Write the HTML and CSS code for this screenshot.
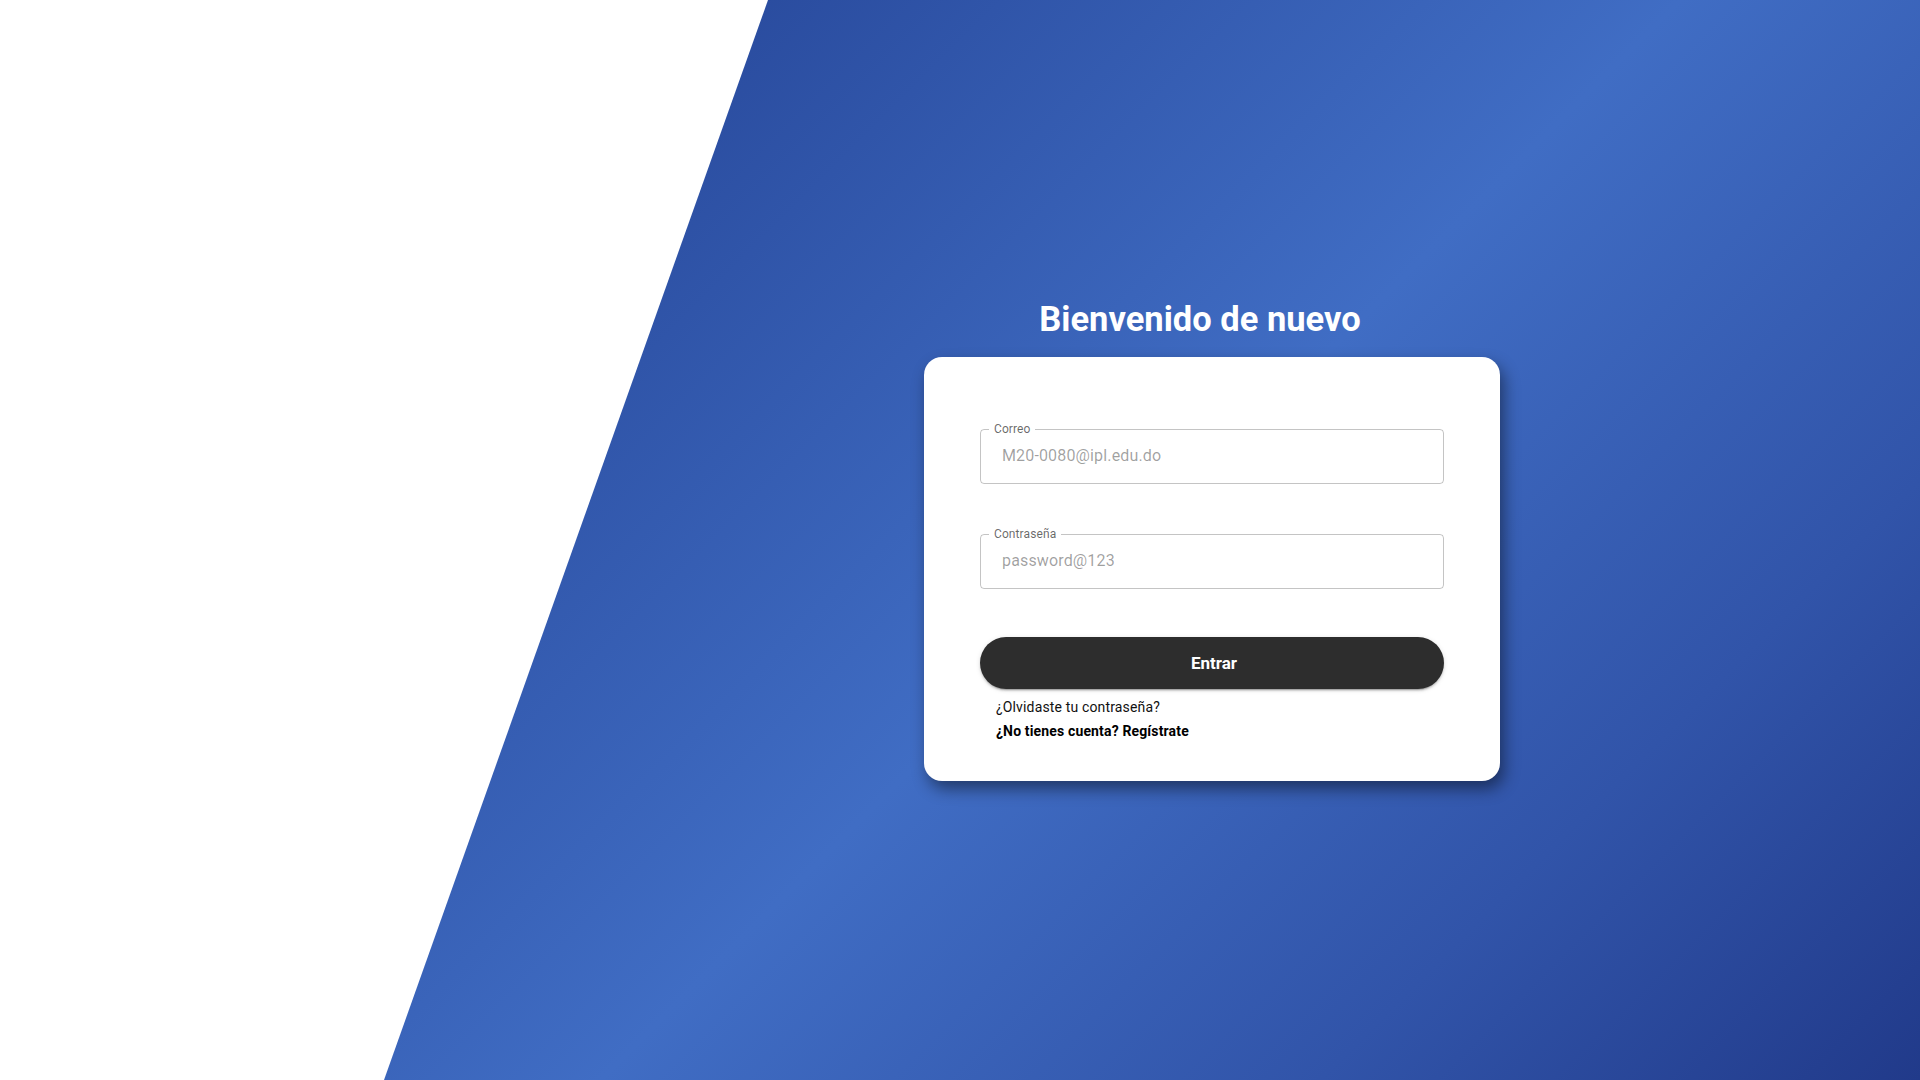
FILE: index.html
```html
<!DOCTYPE html>
<html lang="es">
<head>
<meta charset="utf-8">
<title>Iniciar sesión</title>
<link rel="stylesheet" href="styles.css">
</head>
<body>
<main class="hero">
  <section class="panel">
    <h1 class="title">Bienvenido de nuevo</h1>
    <form class="card">
      <fieldset class="field">
        <legend class="field-label">Correo</legend>
        <input class="field-input" type="email" placeholder="M20-0080@ipl.edu.do">
      </fieldset>
      <fieldset class="field field-gap">
        <legend class="field-label">Contraseña</legend>
        <input class="field-input" type="password" placeholder="password@123">
      </fieldset>
      <button class="btn" type="button">Entrar</button>
      <div class="links">
        <a class="link" href="#">¿Olvidaste tu contraseña?</a>
        <a class="link link-strong" href="#">¿No tienes cuenta? Regístrate</a>
      </div>
    </form>
  </section>
</main>
</body>
</html>
```
FILE: styles.css
```css
* { box-sizing: border-box; }

html, body {
  margin: 0;
  padding: 0;
  width: 100%;
  height: 100%;
  background: #ffffff;
  font-family: Roboto, "Liberation Sans", Arial, sans-serif;
  overflow: hidden;
}

.hero {
  width: 100%;
  height: 100vh;
  display: flex;
  padding-left: 480px;
  background: linear-gradient(135deg, #25459a 0%, #2a4c9f 25%, #406dc4 56%, #3154a9 80%, #213a8a 100%);
  clip-path: polygon(768px 0, 100% 0, 100% 100%, 384px 100%);
}

.panel {
  flex: 1;
  display: flex;
  flex-direction: column;
  align-items: center;
  justify-content: center;
}

.title {
  margin: 0 0 17px 0;
  font-size: 34.5px;
  line-height: 41px;
  font-weight: 700;
  color: #ffffff;
}

.card {
  width: 576px;
  margin-left: 24px;
  background: #ffffff;
  border-radius: 18px;
  padding: 66px 56px 38px 56px;
  display: flex;
  flex-direction: column;
  box-shadow: 4px 8px 16px rgba(0, 0, 0, 0.45);
}

.field {
  margin: 0;
  padding: 0;
  border: 1px solid rgba(0, 0, 0, 0.23);
  border-radius: 4px;
  min-width: 0;
}

.field-gap {
  margin-top: 44px;
}

.field-label {
  margin-left: 8px;
  padding: 0 5px;
  font-size: 12px;
  line-height: 12px;
  letter-spacing: 0.1px;
  color: rgba(0, 0, 0, 0.6);
}

.field-input {
  display: block;
  width: 100%;
  height: 48px;
  margin: 0;
  border: none;
  outline: none;
  background: transparent;
  padding: 0 14px 7px 21px;
  font-family: Roboto, "Liberation Sans", Arial, sans-serif;
  font-size: 16px;
  letter-spacing: 0.15px;
  color: rgba(0, 0, 0, 0.87);
}

.field-input::placeholder {
  color: rgba(0, 0, 0, 0.38);
  opacity: 1;
}

.btn {
  margin-top: 48px;
  height: 52px;
  width: 100%;
  border: none;
  border-radius: 26px;
  background: #2d2d2d;
  color: #ffffff;
  padding: 0 0 0 4px;
  font-family: Roboto, "Liberation Sans", Arial, sans-serif;
  font-size: 17px;
  font-weight: 700;
  cursor: pointer;
  box-shadow: 0 3px 1px -2px rgba(0, 0, 0, 0.2), 0 2px 2px 0 rgba(0, 0, 0, 0.14), 0 1px 5px 0 rgba(0, 0, 0, 0.12);
}

.links {
  margin-top: 7px;
  padding-left: 16px;
  display: flex;
  flex-direction: column;
  align-items: flex-start;
}

.link {
  font-size: 14px;
  line-height: 23.5px;
  letter-spacing: 0.15px;
  color: #111111;
  text-decoration: none;
}

.link-strong {
  font-weight: 700;
  color: #000000;
}
```
